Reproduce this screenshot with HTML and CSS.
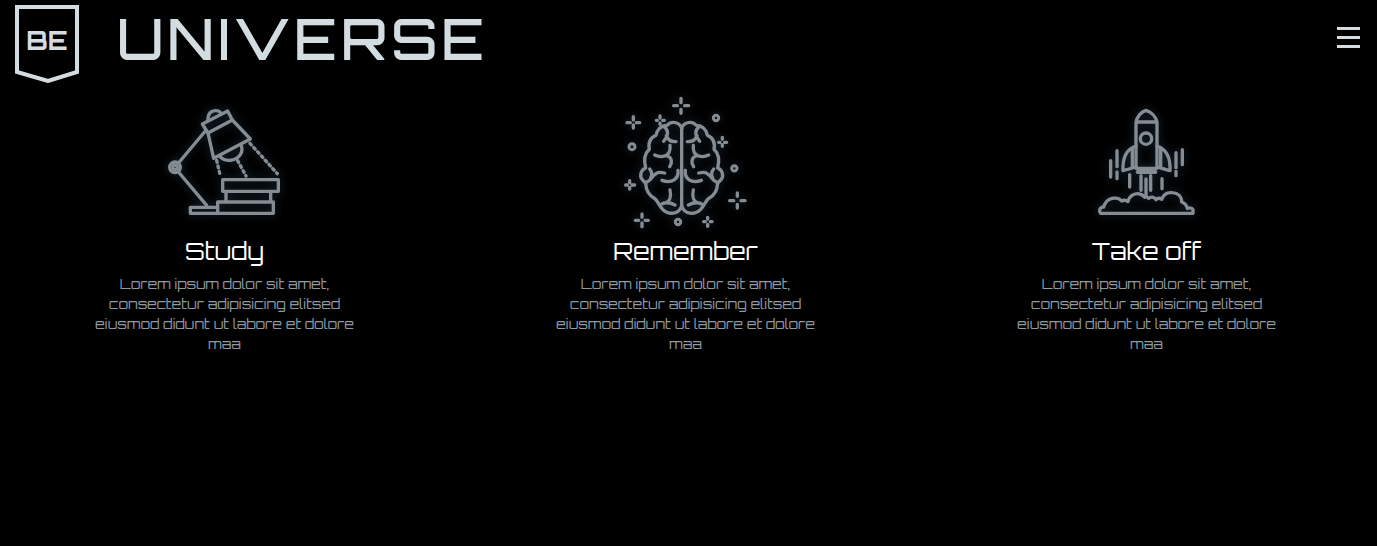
FILE: index.html
```html
<!DOCTYPE html>
<html lang="en">
<head>
<meta charset="utf-8">
<meta name="viewport" content="width=device-width, initial-scale=1">
<title>BE Universe</title>
<link rel="stylesheet" href="styles.css">
</head>
<body>
<header class="header">
  <a class="brand" href="#">
    <svg class="badge" viewBox="0 0 64 78" role="img" aria-label="BE">
      <path d="M2 2H62V67L33 76L2 67Z" fill="none" stroke="#d3dce0" stroke-width="4"/>
      <text class="badge-text" x="32" y="45" text-anchor="middle">BE</text>
    </svg>
    <span class="brand-name">UNIVERSE</span>
  </a>
  <button class="menu" type="button" aria-label="Menu">
    <svg class="menu-icon" viewBox="0 0 23 21" aria-hidden="true"><path d="M0 1.5H23M0 10.5H23M0 19.5H23"/></svg>
  </button>
</header>
<main class="features">
  <article class="feature">
    <svg class="icon" viewBox="-15 -15 420 435" aria-hidden="true">
      <circle cx="45" cy="217" r="16"/><circle cx="45" cy="217" r="9" stroke-width="5"/><circle cx="45" cy="217" r="3"/>
      <path d="M58 201L136 108M58 234L140 331"/>
      <path d="M127 87L203 48L217 75L144 114Z"/>
      <path d="M144 76C143 55 154 46 168 47C177 47 181 51 184 56"/>
      <path d="M144 114L161 190L271 132L217 75"/>
      <path d="M179 184C199 204 229 197 241 179C247 170 247 160 243 150"/>
      <g stroke-dasharray="6 11"><path d="M170 196L181 243M233 197L258 243M270 145L352 236"/></g>
      <path d="M188 254H355V289H188ZM198 289H332V321H198ZM173 321H340V355H173ZM91 337H173V355H91Z"/>
    </svg>
    <h2 class="title">Study</h2>
    <p class="text">Lorem ipsum dolor sit amet, consectetur adipisicing elitsed eiusmod didunt ut labore et dolore maa</p>
  </article>
  <article class="feature">
    <svg class="icon" viewBox="2 0 420 435" aria-hidden="true">
      <defs>
        <g id="hemisphere">
          <path d="M199 116C195 98 171 90 155 106C137 106 124 120 122 136C106 143 98 158 102 178C89 190 85 211 91 234C75 240 72 260 82 270C86 275 90 278 91 280C92 301 104 318 119 326C129 337 132 347 142 358C160 376 190 374 199 348"/>
          <path d="M147 111C159 120 161 134 145 154M153 137C158 151 168 156 182 155"/>
          <path d="M118 195C134 203 153 201 161 188C165 180 165 173 164 166M155 198C171 202 171 219 163 230"/>
          <path d="M103 237C111 247 110 257 106 264M91 277C110 275 111 247 134 247C140 247 144 248 148 249"/>
          <path d="M188 241C191 266 170 282 140 271"/>
          <path d="M164 300C168 318 164 335 150 339M139 342C153 335 167 339 179 345"/>
        </g>
      </defs>
      <use href="#hemisphere"/>
      <use href="#hemisphere" transform="matrix(-1 0 0 1 398 0)"/>
      <path d="M199 116V348"/>
      <path d="M197 25V38M197 58V70M175 47H186M208 47H220"/>
      <path d="M54 80V90M54 105V114M35 98H45M63 98H73"/>
      <path d="M134 78V84M134 99V103M123 91H126M142 91H147"/>
      <path d="M321 142V148M321 164V169M310 157H314M328 157H334"/>
      <path d="M43 272V278M43 292V297M31 285H36M50 285H58"/>
      <path d="M80 372V382M80 399V410M60 391H70M89 391H99"/>
      <path d="M277 382V387M277 403V409M265 395H270M285 395H290"/>
      <path d="M366 309V319M366 343V354M343 332H355M377 332H389"/>
      <g stroke-width="9"><circle cx="50" cy="170" r="9"/><circle cx="302" cy="84" r="8"/><circle cx="357" cy="235" r="8"/><circle cx="188" cy="396" r="8"/></g>
    </svg>
    <h2 class="title">Remember</h2>
    <p class="text">Lorem ipsum dolor sit amet, consectetur adipisicing elitsed eiusmod didunt ut labore et dolore maa</p>
  </article>
  <article class="feature">
    <svg class="icon" viewBox="-25 -15 420 435" aria-hidden="true">
      <path d="M152 220V82C155 64 168 50 182 46C198 51 212 65 215 82V220ZM152 81H215"/>
      <circle cx="182" cy="131" r="17"/>
      <path d="M152 153C125 162 111 184 113 227C127 224 140 219 152 216M141 160V217M215 153C241 162 256 184 254 227C240 224 228 219 215 216M226 160V217"/>
      <path d="M157 231H210" stroke-width="12"/>
      <path d="M167 242V286M182 252V302M196 242V286M133 239V276M230 251V281M76 197V246M95 167V215M95 231V251M272 173V218M272 229V242M291 164V209"/>
      <path d="M46 355H323V344C320 338 313 338 306 340C303 327 295 323 289 321C289 305 278 294 262 293C245 291 234 299 229 313C223 308 216 309 212 314C206 305 196 304 190 310C185 305 182 304 178 307C169 294 153 294 142 300C134 304 130 312 128 320C123 316 115 315 109 318C101 308 84 307 73 313C63 318 58 326 55 336C47 335 42 341 43 350Z"/>
    </svg>
    <h2 class="title">Take off</h2>
    <p class="text">Lorem ipsum dolor sit amet, consectetur adipisicing elitsed eiusmod didunt ut labore et dolore maa</p>
  </article>
</main>
</body>
</html>
```
FILE: styles.css
```css
* { box-sizing: border-box; }
body {
  margin: 0;
  min-height: 100vh;
  background: #000;
  border-right: 1px solid #fff;
  color: #fff;
  font-family: Orbitron, "DejaVu Sans", sans-serif;
}
.header {
  display: flex;
  align-items: flex-start;
  justify-content: space-between;
  padding: 5px 17px 7px 15px;
}
.brand {
  display: flex;
  align-items: flex-start;
  gap: 38px;
  color: #d3dce0;
  text-decoration: none;
}
.badge { width: 64px; height: 78px; }
.badge-text { fill: #d3dce0; font-size: 26px; font-weight: 700; }
.brand-name {
  font-size: 56px;
  font-weight: 500;
  letter-spacing: 4px;
  line-height: 68px;
}
.menu {
  margin-top: 22px;
  padding: 0;
  border: 0;
  background: none;
  cursor: pointer;
}
.menu-icon {
  display: block;
  width: 23px;
  height: 21px;
  stroke: #d3dce0;
  stroke-width: 3;
}
.features {
  display: grid;
  grid-template-columns: repeat(3, 1fr);
  gap: 12px;
  padding-right: 6px;
}
.feature {
  display: flex;
  flex-direction: column;
  align-items: center;
  text-align: center;
}
.icon {
  width: 140px;
  height: 145px;
  overflow: visible;
  fill: none;
  stroke: #868d92;
  stroke-width: 10;
  stroke-linecap: round;
  stroke-linejoin: round;
  filter: drop-shadow(0 0 4px #1a2a3a);
}
.title {
  margin: 0 0 7px;
  font-size: 24px;
  font-weight: 400;
  line-height: 32px;
}
.text {
  max-width: 270px;
  margin: 0;
  color: #8f99a3;
  font-size: 14px;
  line-height: 20px;
}
```
